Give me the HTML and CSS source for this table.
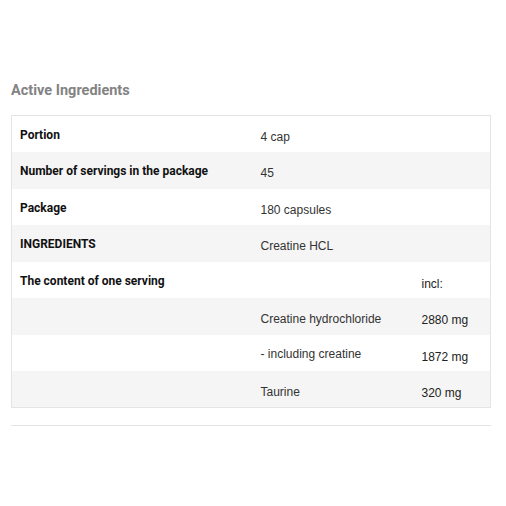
FILE: index.html
```html
<html>
<head>
    <title>Active Ingredients</title>
    <meta charset="utf-8" />
    <link rel="stylesheet" href="styles.css">
</head>
<body>

<div class="composition">
    <h3 class="title">Active Ingredients</h3>

    <table class="ingredients">
        <colgroup>
            <col class="c1" />
            <col class="c2" />
            <col class="c3" />
        </colgroup>
        <tr>
            <th>Portion</th>
            <td colspan="2">4 cap</td>
        </tr>
        <tr>
            <th>Number of servings in the package</th>
            <td colspan="2">45</td>
        </tr>
        <tr>
            <th>Package</th>
            <td colspan="2">180 capsules</td>
        </tr>
        <tr>
            <th>INGREDIENTS</th>
            <td colspan="2">Creatine HCL</td>
        </tr>
        <tr>
            <th>The content of one serving</th>
            <td></td>
            <td class="amount">incl:</td>
        </tr>
        <tr>
            <th></th>
            <td>Creatine hydrochloride</td>
            <td class="amount">2880 mg</td>
        </tr>
        <tr>
            <th></th>
            <td class="sub">- including creatine</td>
            <td class="amount">1872 mg</td>
        </tr>
        <tr>
            <th></th>
            <td>Taurine</td>
            <td class="amount">320 mg</td>
        </tr>
    </table>

    <hr class="sep" />
</div>

</body>
</html>
```

FILE: styles.css
```css
body {
    margin: 0;
    background: #fff;
    font-family: "Liberation Sans", Arial, sans-serif;
}

.composition {
    margin: 0 15px 0 11px;
    padding-top: 82px;
}

.title {
    margin: 0 0 16px 0;
    font-family: Roboto, "Liberation Sans", sans-serif;
    font-size: 14.5px;
    font-weight: 700;
    color: #838383;
}

table.ingredients {
    width: 100%;
    border-collapse: collapse;
    border: 1px solid #e4e4e4;
    table-layout: fixed;
}

col.c1 { width: 240px; }
col.c2 { width: 161px; }

table.ingredients tr {
    height: 36.5px;
}

table.ingredients tr:nth-child(even) {
    background-color: #f5f5f5;
}

th, td {
    padding: 0 0 0 9px;
    text-align: left;
    vertical-align: top;
}

th {
    padding-top: 12px;
    padding-left: 8px;
    font-family: Roboto, "Liberation Sans", sans-serif;
    font-size: 12px;
    font-weight: 700;
    color: #111;
}

td {
    padding-top: 14px;
    font-size: 12px;
    color: #333;
}

td.sub {
    padding-top: 12px;
}

td.amount {
    padding-top: 15px;
    color: #222;
}

hr.sep {
    margin: 17px 0 0 0;
    border: 0;
    border-top: 1px solid #e4e4e4;
}
```
